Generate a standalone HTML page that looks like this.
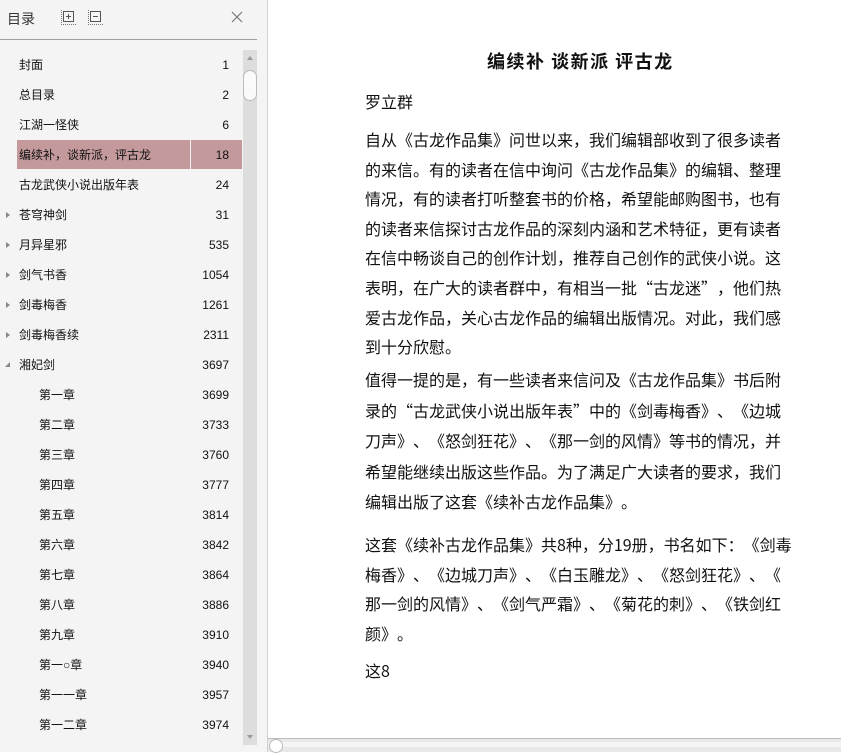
<!DOCTYPE html>
<html><head><meta charset="utf-8"><style>
*{margin:0;padding:0;box-sizing:border-box}
body{width:841px;height:752px;overflow:hidden;background:#fff;font-family:"Liberation Sans","Noto Sans CJK SC",sans-serif;position:relative;text-spacing-trim:space-all}
#side{position:absolute;left:0;top:0;width:268px;height:752px;background:#f4f4f4;border-right:1px solid #d0d0d0}
#hdr{position:absolute;left:0;top:0;width:257px;height:40px;border-bottom:1px solid #a0a0a0}
.row{position:absolute;left:0;width:243px;height:30px;font-size:12px;color:#111;line-height:30px}
.row .t{position:absolute;left:19px}
.row .n{position:absolute;right:14px}
.row.l2 .t{left:39px}
.tri{position:absolute;left:6px;top:12px;width:0;height:0;border-left:4px solid #888;border-top:3px solid transparent;border-bottom:3px solid transparent}
.tri.o{left:5px;top:12px;border-left:none;border-top:none;border-right:5px solid #888;border-bottom:5px solid transparent;transform:rotate(90deg)}
#vs{position:absolute;left:243px;top:50px;width:14px;height:695px;background:#ddd}
#txt{position:absolute;left:365px;top:0;font-size:16px;color:#111;white-space:nowrap;font-family:"Noto Sans CJK SC",sans-serif;text-spacing-trim:space-all}
p{position:absolute;left:0;line-height:29.6px}
.cj{font-family:"Noto Sans CJK SC",sans-serif}
</style></head><body>
<div id="side">
<div id="hdr">
<span style="position:absolute;left:7px;top:9px;font-size:14px;color:#333">目录</span>
<svg style="position:absolute;left:61px;top:10px" width="15" height="15"><rect x="2.5" y="1.5" width="10" height="10" fill="none" stroke="#555"/><path d="M5 6.5h5M7.5 4v5" stroke="#555"/><path d="M0.5 0v15M0 14.5h15" stroke="#777" stroke-dasharray="1 1"/></svg>
<svg style="position:absolute;left:88px;top:10px" width="15" height="15"><rect x="2.5" y="1.5" width="10" height="10" fill="none" stroke="#555"/><path d="M5 6.5h5" stroke="#555"/><path d="M0.5 0v15M0 14.5h15" stroke="#777" stroke-dasharray="1 1"/></svg>
<svg style="position:absolute;left:231px;top:11px" width="12" height="12"><path d="M1 1L11 11M11 1L1 11" stroke="#777" stroke-width="1.2"/></svg>
</div>
<div class="row" style="top:50px"><span class="t">封面</span><span class="n">1</span></div>
<div class="row" style="top:80px"><span class="t">总目录</span><span class="n">2</span></div>
<div class="row" style="top:110px"><span class="t">江湖一怪侠</span><span class="n">6</span></div>
<div style="position:absolute;left:17px;top:140px;width:173px;height:29px;background:#c4999c"></div>
<div style="position:absolute;left:191px;top:140px;width:51px;height:29px;background:#c4999c"></div>
<div class="row" style="top:140px"><span class="t cj">编续补，谈新派，评古龙</span><span class="n">18</span></div>
<div class="row" style="top:170px"><span class="t">古龙武侠小说出版年表</span><span class="n">24</span></div>
<div class="row" style="top:200px"><i class="tri"></i><span class="t">苍穹神剑</span><span class="n">31</span></div>
<div class="row" style="top:230px"><i class="tri"></i><span class="t">月异星邪</span><span class="n">535</span></div>
<div class="row" style="top:260px"><i class="tri"></i><span class="t">剑气书香</span><span class="n">1054</span></div>
<div class="row" style="top:290px"><i class="tri"></i><span class="t">剑毒梅香</span><span class="n">1261</span></div>
<div class="row" style="top:320px"><i class="tri"></i><span class="t">剑毒梅香续</span><span class="n">2311</span></div>
<div class="row" style="top:350px"><i class="tri o"></i><span class="t">湘妃剑</span><span class="n">3697</span></div>
<div class="row l2" style="top:380px"><span class="t">第一章</span><span class="n">3699</span></div>
<div class="row l2" style="top:410px"><span class="t">第二章</span><span class="n">3733</span></div>
<div class="row l2" style="top:440px"><span class="t">第三章</span><span class="n">3760</span></div>
<div class="row l2" style="top:470px"><span class="t">第四章</span><span class="n">3777</span></div>
<div class="row l2" style="top:500px"><span class="t">第五章</span><span class="n">3814</span></div>
<div class="row l2" style="top:530px"><span class="t">第六章</span><span class="n">3842</span></div>
<div class="row l2" style="top:560px"><span class="t">第七章</span><span class="n">3864</span></div>
<div class="row l2" style="top:590px"><span class="t">第八章</span><span class="n">3886</span></div>
<div class="row l2" style="top:620px"><span class="t">第九章</span><span class="n">3910</span></div>
<div class="row l2" style="top:650px"><span class="t">第一○章</span><span class="n">3940</span></div>
<div class="row l2" style="top:680px"><span class="t">第一一章</span><span class="n">3957</span></div>
<div class="row l2" style="top:710px"><span class="t">第一二章</span><span class="n">3974</span></div>
<div id="vs">
<div style="position:absolute;left:4px;top:6px;border-bottom:4px solid #999;border-left:3px solid transparent;border-right:3px solid transparent"></div>
<div style="position:absolute;left:0;top:20px;width:14px;height:31px;background:#fafafa;border:1px solid #bbb;border-radius:7px"></div>
<div style="position:absolute;left:4px;bottom:6px;border-top:4px solid #999;border-left:3px solid transparent;border-right:3px solid transparent"></div>
</div>
</div>
<div style="position:absolute;left:268px;top:738px;width:573px;height:14px;background:#e8e8e8;border-top:1px solid #bbb">
<div style="position:absolute;left:0;top:3px;width:573px;height:5px;background:#f4f4f4"></div>
<div style="position:absolute;left:1px;top:0;width:14px;height:14px;border-radius:50%;background:#fff;border:1px solid #bbb"></div>
</div>
<div id="txt">
<div style="position:absolute;left:122px;top:48px;font-size:18px;font-weight:bold;letter-spacing:1.5px">编续补 谈新派 评古龙</div>
<p style="top:87px">罗立群</p>
<p style="top:125px">自从《古龙作品集》问世以来，我们编辑部收到了很多读者<br>的来信。有的读者在信中询问《古龙作品集》的编辑、整理<br>情况，有的读者打听整套书的价格，希望能邮购图书，也有<br>的读者来信探讨古龙作品的深刻内涵和艺术特征，更有读者<br>在信中畅谈自己的创作计划，推荐自己创作的武侠小说。这<br>表明，在广大的读者群中，有相当一批“古龙迷”，他们热<br>爱古龙作品，关心古龙作品的编辑出版情况。对此，我们感<br>到十分欣慰。</p>
<p style="top:364px;line-height:30.5px">值得一提的是，有一些读者来信问及《古龙作品集》书后附<br>录的“古龙武侠小说出版年表”中的《剑毒梅香》、《边城<br>刀声》、《怒剑狂花》、《那一剑的风情》等书的情况，并<br>希望能继续出版这些作品。为了满足广大读者的要求，我们<br>编辑出版了这套《续补古龙作品集》。</p>
<p style="top:530px;line-height:29.5px">这套《续补古龙作品集》共8种，分19册，书名如下：《剑毒<br>梅香》、《边城刀声》、《白玉雕龙》、《怒剑狂花》、《<br>那一剑的风情》、《剑气严霜》、《菊花的刺》、《铁剑红<br>颜》。</p>
<p style="top:656px">这8</p>
</div>
</body></html>
